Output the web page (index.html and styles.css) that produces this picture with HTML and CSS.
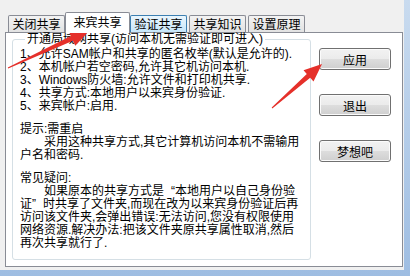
FILE: index.html
```html
<!DOCTYPE html>
<html>
    <head>
        <title>来宾共享</title>
        <link rel="stylesheet" href="styles.css">
    </head>
<body>
    <div class="dialog">
        <div class="tabs">
            <div class="tab">关闭共享</div>
            <div class="tab selected">来宾共享</div>
            <div class="tab hover">验证共享</div>
            <div class="tab">共享知识</div>
            <div class="tab">设置原理</div>
        </div>

        <div class="panel">
            <fieldset class="group">
                <legend>开通局域网共享(访问本机无需验证即可进入)</legend>
                <p>1、允许SAM帐户和共享的匿名枚举(默认是允许的).<br>
                2、本机帐户若空密码,允许其它机访问本机.<br>
                3、Windows防火墙:允许文件和打印机共享.<br>
                4、共享方式:本地用户以来宾身份验证.<br>
                5、来宾帐户:启用.</p>
                <p>提示:需重启<br>
                　　采用这种共享方式,其它计算机访问本机不需输用<br>
                户名和密码.</p>
                <p>常见疑问:<br>
                　　如果原本的共享方式是<span class="q-open">“</span>本地用户以自己身份验<br>
                证<span class="q-close">”</span>时共享了文件夹,而现在改为以来宾身份验证后再<br>
                访问该文件夹,会弹出错误:无法访问,您没有权限使用<br>
                网络资源.解决办法:把该文件夹原共享属性取消,然后<br>
                再次共享就行了.</p>
            </fieldset>

            <div class="buttons">
                <button class="button">应用</button>
                <button class="button">退出</button>
                <button class="button">梦想吧</button>
            </div>
        </div>
    </div>

    <!-- red arrows drawn over the dialog -->
    <svg class="arrows" width="410" height="276" viewBox="0 0 410 276">
        <polygon points="8.2,68.5 72.9,40.7 75.3,45.7 90,30 68.5,31.1 70.9,36.1 7.8,67.5" />
        <polygon points="272.3,108.4 310.2,77.8 313.5,81.5 322,64 303.5,70.3 306.8,74 271.7,107.6" />
    </svg>
</body>
</html>
```

FILE: styles.css
```css
* {
    box-sizing: border-box;
}

body {
    margin: 0;
    width: 410px;
    height: 276px;
    overflow: hidden;
    position: relative;
    background: linear-gradient(#c9dbef, #9ebde2);
    font-family: "Noto Sans CJK SC", "Liberation Sans", sans-serif;
    font-size: 12px;
    color: #000;
}

.dialog {
    width: 404px;
    height: 270px;
    padding: 12px 1px 0 5px;
    background-color: #f0f0f0;
    display: flex;
    flex-direction: column;
}

.tabs {
    display: flex;
    align-items: flex-end;
    gap: 2px;
    height: 21px;
    margin-bottom: -1px;
    padding-left: 3px;
}

.tab {
    width: 57px;
    height: 17px;
    margin-bottom: 1px;
    border: 1px solid #898c95;
    border-bottom: none;
    border-radius: 2px 2px 0 0;
    background: linear-gradient(#f3f3f3, #e2e2e2);
    line-height: 15px;
    text-align: center;
}

.tab.hover {
    border-color: #3c7fb1;
    background: linear-gradient(#eaf6fd, #c6e6fa);
}

.tab.selected {
    position: relative;
    z-index: 1;
    width: 65px;
    height: 21px;
    margin: 0 -2px;
    background: #fff;
    line-height: 18px;
}

.panel {
    width: 398px;
    height: 235px;
    border: 1px solid #898c95;
    background-color: #fff;
    display: flex;
    padding: 0 0 0 6px;
}

.group {
    width: 299px;
    height: 227px;
    margin: 0;
    padding: 2px 0 0 7px;
    border: 1px solid #d5dfe5;
    border-radius: 3px;
    /* latin face first keeps each text line box close to 13px */
    font-family: "Liberation Sans", "Noto Sans CJK SC", sans-serif;
}

.group legend {
    margin-left: 5px;
    padding: 0 2px;
    line-height: 13px;
}

.group p {
    margin: 0 0 10px;
    line-height: 13px;
    white-space: nowrap;
}

/* full width quote marks */
.q-open {
    margin-left: 7px;
}

.q-close {
    margin-right: 7px;
}

.buttons {
    display: flex;
    flex-direction: column;
    gap: 24px;
    margin: 15px 0 0 8px;
}

.button {
    width: 72px;
    height: 22px;
    padding: 0;
    border: 1px solid #707070;
    border-radius: 3px;
    background: linear-gradient(#f2f2f2 0%, #ebebeb 50%, #dddddd 51%, #cfcfcf 100%);
    box-shadow: inset 0 0 0 1px #fbfbfb;
    font-family: inherit;
    font-size: 12px;
    color: #000;
}

.arrows {
    position: absolute;
    top: 0;
    left: 0;
    pointer-events: none;
}

.arrows polygon {
    fill: #e5302a;
}
```
